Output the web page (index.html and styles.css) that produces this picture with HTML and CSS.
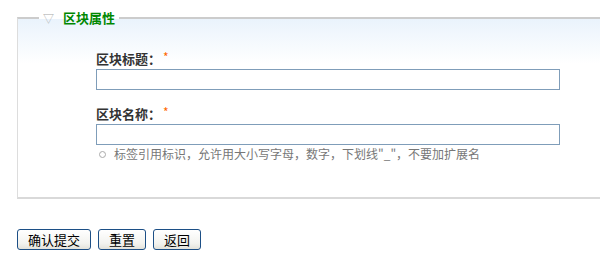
FILE: index.html
```html
<!DOCTYPE html>
<html lang="zh-CN">
<head>
    <meta charset="UTF-8">
    <title>区块属性</title>
    <link rel="stylesheet" href="styles.css">
</head>
<body>
    <form class="blockForm">
        <fieldset class="box">
            <legend class="boxTit"><span class="arrow">▽</span>区块属性</legend>
            <div class="fields">
                <div class="field">
                    <label class="label">区块标题：<em>*</em></label>
                    <input type="text" class="text">
                </div>
                <div class="field">
                    <label class="label">区块名称：<em>*</em></label>
                    <input type="text" class="text">
                    <p class="tip"><span class="dot"></span>标签引用标识，允许用大小写字母，数字，下划线"_"，不要加扩展名</p>
                </div>
            </div>
        </fieldset>
        <div class="btns">
            <button type="button" class="btn">确认提交</button>
            <button type="button" class="btn">重置</button>
            <button type="button" class="btn">返回</button>
        </div>
    </form>
</body>
</html>
```
FILE: styles.css
```css
body, p, fieldset, legend {
    margin: 0;
    padding: 0;
}
body {
    background: #fff;
    font: 12px "Noto Sans CJK SC", "DejaVu Sans", sans-serif;
    color: #333;
    overflow: hidden;
}
.blockForm {
    padding: 10px 0 0 17px;
}
.box {
    width: 600px;
    height: 189px;
    box-sizing: border-box;
    border-style: solid;
    border-width: 2px 1px 2px 1px;
    border-color: #ccc #ccc #d9d9d9 #ddd;
    background: linear-gradient(#eaf3fc, #fff 45px);
    padding: 0;
}
.boxTit {
    margin-left: 21px;
    padding: 0 4px;
    color: #080;
    font-size: 13px;
    font-weight: bold;
    line-height: 15px;
}
.arrow {
    color: #aaa;
    font-weight: normal;
    font-size: 11px;
    margin-right: 9px;
}
.fields {
    padding-left: 78px;
}
.field {
    padding-top: 22px;
}
.field + .field {
    padding-top: 13px;
}
.label {
    display: block;
    font-size: 13px;
    font-weight: bold;
    line-height: 17px;
    margin-bottom: 2px;
}
.label em {
    color: #f60;
    font-size: 12px;
    font-style: normal;
    font-weight: normal;
    margin-left: 2px;
    vertical-align: 2px;
}
.text {
    display: block;
    width: 464px;
    height: 21px;
    box-sizing: border-box;
    border: 1px solid #7f9db9;
    background: #fff;
    margin: 0;
}
.tip {
    color: #777;
    line-height: 18px;
    margin-top: 0;
}
.dot {
    display: inline-block;
    width: 5px;
    height: 5px;
    border: 1px solid #aaa;
    border-radius: 50%;
    margin: 0 8px 1px 3px;
}
.btns {
    padding-top: 30px;
    display: flex;
    gap: 7px;
}
.btn {
    font: 13px "Noto Sans CJK SC", sans-serif;
    color: #000;
    height: 21px;
    padding: 0 10px;
    line-height: 17px;
    border: 1px solid #1c4f86;
    border-radius: 3px;
    background: linear-gradient(#fff, #f3f3ef 70%, #e3e2da);
}
```
